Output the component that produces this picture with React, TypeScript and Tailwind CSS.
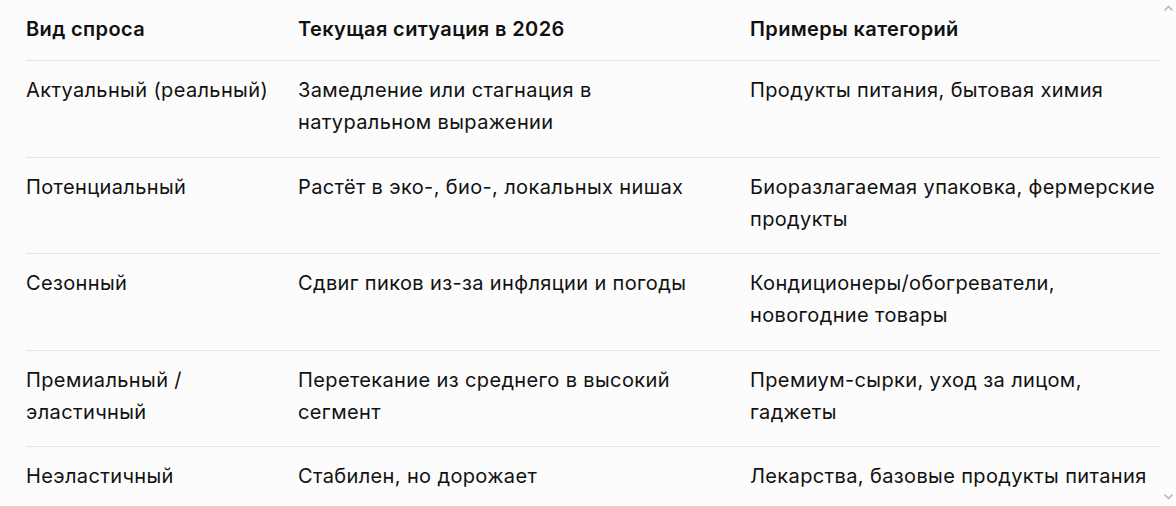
import React from 'react';

const rows = [
  {
    kind: 'Актуальный (реальный)',
    now: 'Замедление или стагнация в натуральном выражении',
    examples: 'Продукты питания, бытовая химия',
  },
  {
    kind: 'Потенциальный',
    now: 'Растёт в эко-, био-, локальных нишах',
    examples: 'Биоразлагаемая упаковка, фермерские продукты',
  },
  {
    kind: 'Сезонный',
    now: 'Сдвиг пиков из-за инфляции и погоды',
    examples: 'Кондиционеры/обогреватели, новогодние товары',
  },
  {
    kind: 'Премиальный / эластичный',
    now: 'Перетекание из среднего в высокий сегмент',
    examples: 'Премиум-сырки, уход за лицом, гаджеты',
  },
  {
    kind: 'Неэластичный',
    now: 'Стабилен, но дорожает',
    examples: 'Лекарства, базовые продукты питания',
  },
];

function Chevron({ up }: { up?: boolean }) {
  return (
    <svg width="9" height="6" viewBox="0 0 9 6" className="text-[#b5b5b5]">
      <path
        d={up ? 'M1 5 L4.5 1.5 L8 5' : 'M1 1 L4.5 4.5 L8 1'}
        fill="none"
        stroke="currentColor"
        strokeWidth="1.6"
        strokeLinecap="round"
        strokeLinejoin="round"
      />
    </svg>
  );
}

export default function App() {
  return (
    <div
      className="relative h-[506px] w-[1176px] overflow-hidden bg-[#fcfcfc] text-[#111111]"
      style={{ fontFamily: 'Inter, "Noto Sans", sans-serif' }}
    >
      <div className="absolute right-[3px] top-[5px]">
        <Chevron up />
      </div>
      <div className="absolute bottom-[6px] right-[3px]">
        <Chevron />
      </div>

      <div className="pl-[26px] pr-4">
        <table className="w-[1134px] table-fixed border-collapse text-left text-[20px] leading-[32px] tracking-[0.37px]">
          <colgroup>
            <col className="w-[272px]" />
            <col className="w-[452px]" />
            <col className="w-[410px]" />
          </colgroup>
          <thead>
            <tr className="border-b border-[#e5e5e5]">
              <th className="pb-[15px] pr-6 pt-[13px] font-semibold">Вид спроса</th>
              <th className="pb-[15px] pr-[52px] pt-[13px] font-semibold">Текущая ситуация в 2026</th>
              <th className="pb-[15px] pt-[13px] font-semibold">Примеры категорий</th>
            </tr>
          </thead>
          <tbody>
            {rows.map((r) => (
              <tr key={r.kind} className="border-b border-[#e5e5e5] align-top">
                <td className="pb-[18.5px] pr-6 pt-[13px]">{r.kind}</td>
                <td className="pb-[18.5px] pr-[52px] pt-[13px]">{r.now}</td>
                <td className="pb-[18.5px] pt-[13px]">{r.examples}</td>
              </tr>
            ))}
          </tbody>
        </table>
      </div>
    </div>
  );
}
